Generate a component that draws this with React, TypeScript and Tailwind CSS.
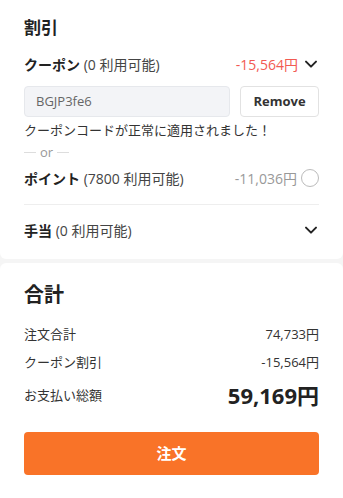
import React from "react";

const Chevron = () => (
  <svg width="16" height="16" viewBox="0 0 24 24" fill="none" stroke="#222" strokeWidth="3" strokeLinecap="round" strokeLinejoin="round">
    <path d="M4.5 8.5l7.5 7.5 7.5-7.5" />
  </svg>
);

export default function App() {
  return (
    <div
      className="w-[343px] h-[498px] bg-[#f5f5f5] flex flex-col gap-[4px] text-[#333]"
      style={{ fontFamily: '"Open Sans", "Noto Sans CJK JP", sans-serif' }}
    >
      <div className="bg-white px-6 pt-[16px] pb-[18px] rounded-b-[6px]">
        <h2 className="text-[17px] font-bold leading-[24px] text-[#222]">割引</h2>
        <div className="mt-[14px] flex items-center justify-between h-[20px]">
          <div className="text-[14px]">
            <span className="font-bold text-[#222]">クーポン</span> <span className="text-[#444]">(0 利用可能)</span>
          </div>
          <div className="flex items-center gap-[5px]">
            <span className="text-[14px] text-[#f25a52]">-15,564円</span>
            <Chevron />
          </div>
        </div>
        <div className="mt-[12px] flex gap-[10px]">
          <div className="flex-1 h-[31px] bg-[#f3f4f7] border border-[#e6e8ec] rounded-[4px] flex items-center px-[11px] text-[13px] text-[#666]">
            BGJP3fe6
          </div>
          <button className="w-[79px] h-[31px] bg-white border border-[#e2e2e2] rounded-[4px] text-[13px] font-bold text-[#333]">
            Remove
          </button>
        </div>
        <div className="mt-[3px] text-[13px] leading-[20px] text-[#333]">クーポンコードが正常に適用されました！</div>
        <div className="mt-[3px] flex items-center gap-[4px] text-[13px] text-[#999] leading-[18px]">
          <span className="w-[12px] h-px bg-[#ddd]"></span>
          <span>or</span>
          <span className="w-[12px] h-px bg-[#ddd]"></span>
        </div>
        <div className="mt-[6px] flex items-center justify-between h-[22px]">
          <div className="text-[14px]">
            <span className="font-bold text-[#222]">ポイント</span> <span className="text-[#444]">(7800 利用可能)</span>
          </div>
          <div className="flex items-center gap-[4px]">
            <span className="text-[14px] text-[#999]">-11,036円</span>
            <span className="w-[18px] h-[18px] rounded-full border border-[#bbb]"></span>
          </div>
        </div>
        <div className="mt-[15px] h-px bg-[#eeeeee]"></div>
        <div className="mt-[14px] flex items-center justify-between h-[22px]">
          <div className="text-[14px]">
            <span className="font-bold text-[#222]">手当</span> <span className="text-[#444]">(0 利用可能)</span>
          </div>
          <Chevron />
        </div>
      </div>
      <div className="flex-1 bg-white px-6 pt-[18px] rounded-t-[6px]">
        <h2 className="text-[20px] font-bold leading-[28px] text-[#222]">合計</h2>
        <div className="mt-[15px] flex justify-between text-[13px] leading-[20px]">
          <span>注文合計</span>
          <span>74,733円</span>
        </div>
        <div className="mt-[8px] flex justify-between text-[13px] leading-[20px]">
          <span>クーポン割引</span>
          <span>-15,564円</span>
        </div>
        <div className="mt-[8px] flex justify-between items-center">
          <span className="text-[13px] leading-[20px]">お支払い総額</span>
          <span className="text-[22px] font-bold leading-[30px] text-[#222]">59,169円</span>
        </div>
        <button className="mt-[22px] w-full h-[43px] bg-[#f97328] rounded-[4px] text-white text-[15px] font-bold">
          注文
        </button>
      </div>
    </div>
  );
}
